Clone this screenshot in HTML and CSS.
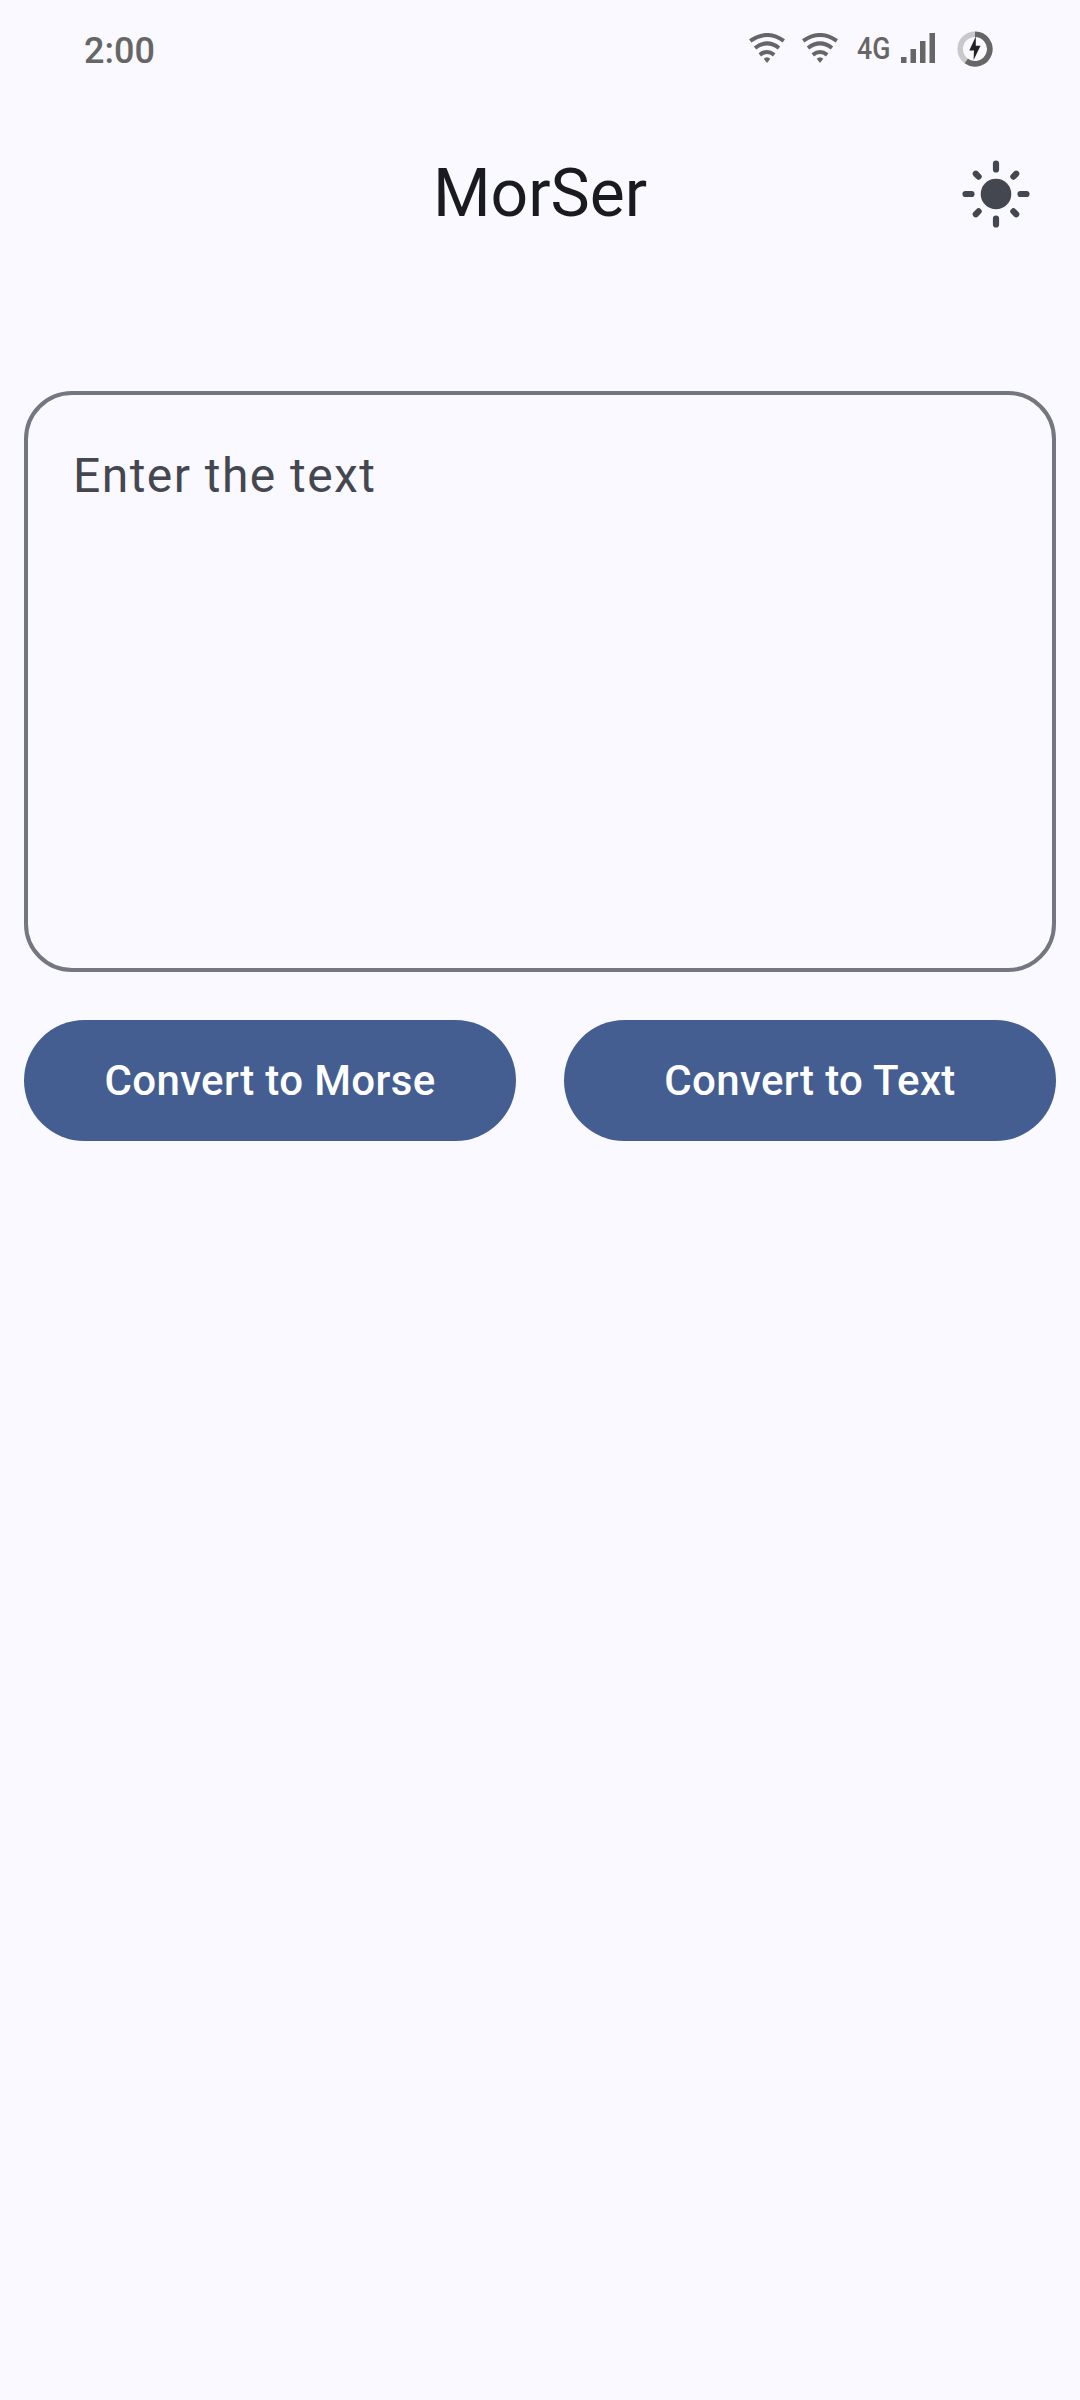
FILE: index.html
```html
<!DOCTYPE html>
<html lang="en">
<head>
<meta charset="utf-8">
<title>MorSer</title>
<link rel="stylesheet" href="styles.css">
</head>
<body>
<div class="status-bar">
  <span class="clock">2:00</span>
  <div class="status-icons">
    <svg class="wifi" viewBox="0 0 36 30" width="36" height="30"><g fill="none" stroke="#666" stroke-width="4"><path d="M1.2 7.8Q18 -3.8 34.8 7.8"/><path d="M6 15Q18 5.8 30 15"/><path d="M10.8 21.8Q18 16.2 25.2 21.8"/></g><path d="M14.7 25.8Q18 22.8 21.3 25.8L18 30Z" fill="#666"/></svg>
    <svg class="wifi" viewBox="0 0 36 30" width="36" height="30"><g fill="none" stroke="#666" stroke-width="4"><path d="M1.2 7.8Q18 -3.8 34.8 7.8"/><path d="M6 15Q18 5.8 30 15"/><path d="M10.8 21.8Q18 16.2 25.2 21.8"/></g><path d="M14.7 25.8Q18 22.8 21.3 25.8L18 30Z" fill="#666"/></svg>
    <span class="network">4G</span>
    <svg class="signal" viewBox="0 0 34 30" width="34" height="30" fill="#666"><path d="M0 24h5.5v6H0zM9.5 16H15v14H9.5zM19 8h5.5v22H19zM28.5 0H34v30h-5.5z"/></svg>
    <svg class="battery" viewBox="0 0 36 36" width="36" height="36"><circle cx="18" cy="18" r="14.8" fill="none" stroke="#c9c9cc" stroke-width="5.6"/><path d="M18 3.2A14.8 14.8 0 1 1 9.3 30" fill="none" stroke="#666" stroke-width="5.6"/><path d="M18.8 5.5L12.3 19.4H17L16.6 29L23.5 14.8H18.8Z" fill="#222"/></svg>
  </div>
</div>
<header class="app-bar">
  <h1 class="title">MorSer</h1>
  <button class="theme-toggle" aria-label="Toggle theme">
    <svg viewBox="0 0 68 68" width="68" height="68"><circle cx="34" cy="34" r="15.3" fill="#44474f"/><path d="M34 3.5v6M34 58.5v6M3.5 34h6M58.5 34h6M13.8 13.8l2.8 2.8M51.4 51.4l2.8 2.8M13.8 54.2l2.8-2.8M51.4 16.6l2.8-2.8" fill="none" stroke="#44474f" stroke-width="6.2" stroke-linecap="round"/></svg>
  </button>
</header>
<main class="content">
  <textarea class="field" placeholder="Enter the text"></textarea>
  <div class="actions">
    <button class="action">Convert to Morse</button>
    <button class="action">Convert to Text</button>
  </div>
</main>
</body>
</html>
```
FILE: styles.css
```css
* { box-sizing: border-box; }
body {
  margin: 0;
  min-height: 2400px;
  background: #faf9ff;
  font-family: Roboto, sans-serif;
}
.status-bar {
  display: flex;
  justify-content: space-between;
  height: 97px;
  padding: 0 87px 0 84px;
}
.clock {
  padding-top: 30px;
  font-size: 36px;
  font-weight: 500;
  line-height: 42px;
  color: #666;
}
.status-icons {
  display: flex;
  align-items: flex-start;
}
.wifi { margin: 33px 17px 0 0; }
.network {
  width: 32px;
  margin: 31px 12px 0 2px;
  font-size: 31px;
  font-weight: 500;
  line-height: 36px;
  color: #666;
  transform: scaleX(0.86);
  transform-origin: left;
}
.signal { margin-top: 33px; }
.battery { margin: 31px 0 0 22px; }
.app-bar {
  display: grid;
  grid-template-columns: 1fr auto 1fr;
  align-items: center;
  height: 194px;
  padding: 0 50px;
}
.title {
  grid-column: 2;
  margin: 0;
  font-size: 66px;
  font-weight: 400;
  line-height: 84px;
  color: #1a1b20;
}
.theme-toggle {
  display: flex;
  justify-self: end;
  padding: 0;
  border: 0;
  background: none;
}
.content { padding: 100px 24px 0; }
.field {
  display: block;
  width: 100%;
  height: 581px;
  padding: 45px;
  border: 4px solid #74777f;
  border-radius: 48px;
  outline: 0;
  resize: none;
  background: transparent;
  font: 400 48px/72px Roboto, sans-serif;
  letter-spacing: 1.44px;
}
.field::placeholder { color: #44474f; opacity: 1; }
.actions {
  display: grid;
  grid-template-columns: 1fr 1fr;
  gap: 48px;
  margin-top: 48px;
}
.action {
  height: 121px;
  padding: 1px 0 0;
  border: 0;
  border-radius: 60.5px;
  background: #445e91;
  color: #fff;
  font: 500 42px/60px Roboto, sans-serif;
  letter-spacing: 0.36px;
}
```
